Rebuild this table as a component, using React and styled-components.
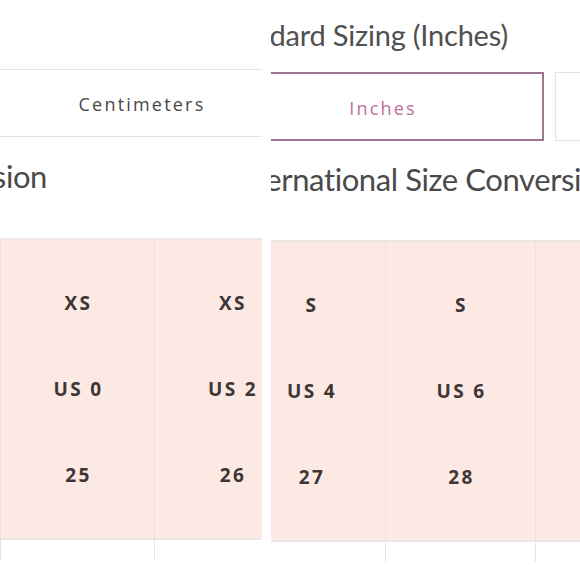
import React from "react";
import styled, { createGlobalStyle } from "styled-components";

const Global = createGlobalStyle`
  html, body { margin: 0; padding: 0; background: #ffffff; }
  #root { width: 580px; height: 580px; overflow: hidden; }
`;

const Collage = styled.div`
  display: flex;
  width: 580px;
  height: 580px;
  background: #ffffff;
  gap: ${(p) => p.$gap}px;
`;

const Panel = styled.section`
  width: ${(p) => (p.$width ? `${p.$width}px` : "auto")};
  flex: ${(p) => (p.$width ? "none" : "1")};
  overflow: hidden;
  display: flex;
  flex-direction: column;
  min-width: 0;
`;

const TitleRow = styled.div`
  height: ${(p) => p.$h}px;
  box-sizing: border-box;
  padding-top: ${(p) => p.$pt || 0}px;
  display: flex;
  justify-content: flex-end;
  width: ${(p) => p.$end}px;
  flex: none;
`;

const Title = styled.h2`
  margin: 0;
  white-space: nowrap;
  font-family: Lato, "Open Sans", sans-serif;
  font-weight: 400;
  font-size: 29px;
  letter-spacing: -0.2px;
  line-height: 1.2;
  color: #505050;
`;

const TabRow = styled.div`
  height: ${(p) => p.$h}px;
  display: flex;
  gap: 11px;
  margin-left: ${(p) => p.$offset}px;
  flex: none;
`;

const Tab = styled.div`
  flex: none;
  width: 322px;
  height: 100%;
  box-sizing: border-box;
  display: flex;
  align-items: center;
  justify-content: center;
  padding-top: 2px;
  border: ${(p) => (p.$active ? "2px solid #a07590" : "1.5px solid #e4e4e4")};
  font-family: "Open Sans", Lato, sans-serif;
  font-size: 18px;
  letter-spacing: 2.2px;
  color: ${(p) => (p.$active ? "#c0709a" : "#474747")};
`;

const HeadingRow = styled.div`
  height: ${(p) => p.$h}px;
  box-sizing: border-box;
  padding-top: ${(p) => p.$pt}px;
  display: flex;
  justify-content: ${(p) => (p.$alignEnd ? "flex-end" : "flex-start")};
  width: ${(p) => (p.$end ? `${p.$end}px` : "auto")};
  margin-left: ${(p) => p.$offset || 0}px;
  flex: none;
`;

const Heading = styled.h1`
  margin: 0;
  white-space: nowrap;
  font-family: Lato, "Open Sans", sans-serif;
  font-weight: 400;
  font-size: 31px;
  letter-spacing: -0.4px;
  line-height: 1.2;
  color: #4a4a4a;
`;

const Table = styled.div`
  display: grid;
  grid-template-columns: repeat(${(p) => p.$cols}, ${(p) => p.$colW}px);
  margin-left: ${(p) => p.$offset}px;
  flex: none;
`;

const SizeColumn = styled.div`
  display: grid;
  grid-template-rows: 22px repeat(3, 86px) 22px 20px;
  border-right: 1.5px solid #ece2df;
  border-left: ${(p) => (p.$first ? "1.5px solid #ece2df" : "none")};
`;

const Spacer = styled.div`
  background: #fce9e3;
  border-top: ${(p) => (p.$top ? "2px solid #efe5e3" : "none")};
  border-bottom: ${(p) => (p.$bottom ? "2px solid #eee6e4" : "none")};
`;

const Cell = styled.div`
  background: #fce9e3;
  display: flex;
  align-items: center;
  justify-content: center;
  padding-left: 2px;
  font-family: "Open Sans", Lato, sans-serif;
  font-weight: 700;
  font-size: 19px;
  letter-spacing: 2.4px;
  color: #3e3636;
`;

const Footer = styled.div`
  background: #ffffff;
`;

const leftCols = [
  ["XS", "US 0", "25"],
  ["XS", "US 2", "26"],
];

const rightCols = [
  ["S", "US 4", "27"],
  ["S", "US 6", "28"],
  ["", "", ""],
];

function SizeTable({ cols, colW, offset }) {
  return (
    <Table $cols={cols.length} $colW={colW} $offset={offset}>
      {cols.map((col, i) => (
        <SizeColumn key={i} $first={i === 0}>
          <Spacer $top />
          {col.map((v, j) => (
            <Cell key={j}>{v}</Cell>
          ))}
          <Spacer $bottom />
          <Footer />
        </SizeColumn>
      ))}
    </Table>
  );
}

export default function App() {
  return (
    <>
      <Global />
      <Collage $gap={9}>
        <Panel $width={262}>
          <TitleRow $h={69} $end={262} />
          <TabRow $h={68} $offset={-19}>
            <Tab>Centimeters</Tab>
          </TabRow>
          <HeadingRow $h={101} $pt={21} $alignEnd $end={47}>
            <Heading>International Size Conversion</Heading>
          </HeadingRow>
          <SizeTable cols={leftCols} colW={155} offset={0} />
        </Panel>
        <Panel>
          <TitleRow $h={72} $pt={18} $end={237}>
            <Title>Standard Sizing (Inches)</Title>
          </TitleRow>
          <TabRow $h={69} $offset={-49}>
            <Tab $active>Inches</Tab>
            <Tab>Centimeters</Tab>
          </TabRow>
          <HeadingRow $h={99} $pt={20} $offset={-41}>
            <Heading>International Size Conversion</Heading>
          </HeadingRow>
          <SizeTable cols={rightCols} colW={150} offset={-35} />
        </Panel>
      </Collage>
    </>
  );
}
